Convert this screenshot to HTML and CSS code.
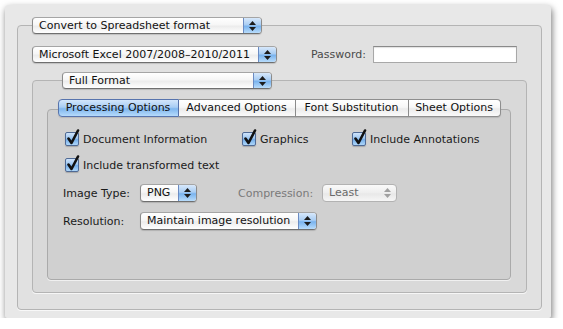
FILE: index.html
```html
<!DOCTYPE html>
<html>
<head>
<meta charset="utf-8">
<link rel="stylesheet" href="styles.css">
</head>
<body>
<div class="window">
  <div class="group g1">
    <div class="popup title p-convert">
      <span class="ptext">Convert to Spreadsheet format</span>
      <span class="parrow"><svg width="7" height="10" viewBox="0 0 7 10"><polygon points="0,4 3.5,0 7,4"/><polygon points="0,6 7,6 3.5,10"/></svg></span>
    </div>
    <div class="row r-format">
      <div class="popup p-excel">
        <span class="ptext">Microsoft Excel 2007/2008–2010/2011</span>
        <span class="parrow"><svg width="7" height="10" viewBox="0 0 7 10"><polygon points="0,4 3.5,0 7,4"/><polygon points="0,6 7,6 3.5,10"/></svg></span>
      </div>
      <span class="lbl pw">Password:</span>
      <div class="field"></div>
    </div>
    <div class="group g2">
      <div class="popup title p-full">
        <span class="ptext">Full Format</span>
        <span class="parrow"><svg width="7" height="10" viewBox="0 0 7 10"><polygon points="0,4 3.5,0 7,4"/><polygon points="0,6 7,6 3.5,10"/></svg></span>
      </div>
      <div class="tabbox">
        <div class="tabs">
          <div class="tab sel t1">Processing Options</div>
          <div class="tab t2">Advanced Options</div>
          <div class="tab t3">Font Substitution</div>
          <div class="tab t4">Sheet Options</div>
        </div>
        <div class="pane">
          <div class="crow c1">
            <label class="cb w1"><span class="box"><svg width="16" height="17" viewBox="0 0 16 17"><path d="M3.5 9.5 L6.5 14 L13 1.5" fill="none" stroke="#111" stroke-width="2.6" stroke-linecap="round" stroke-linejoin="round"/></svg></span>Document Information</label>
            <label class="cb w2"><span class="box"><svg width="16" height="17" viewBox="0 0 16 17"><path d="M3.5 9.5 L6.5 14 L13 1.5" fill="none" stroke="#111" stroke-width="2.6" stroke-linecap="round" stroke-linejoin="round"/></svg></span>Graphics</label>
            <label class="cb"><span class="box"><svg width="16" height="17" viewBox="0 0 16 17"><path d="M3.5 9.5 L6.5 14 L13 1.5" fill="none" stroke="#111" stroke-width="2.6" stroke-linecap="round" stroke-linejoin="round"/></svg></span>Include Annotations</label>
          </div>
          <div class="crow c2">
            <label class="cb"><span class="box"><svg width="16" height="17" viewBox="0 0 16 17"><path d="M3.5 9.5 L6.5 14 L13 1.5" fill="none" stroke="#111" stroke-width="2.6" stroke-linecap="round" stroke-linejoin="round"/></svg></span>Include transformed text</label>
          </div>
          <div class="frow f1">
            <span class="lbl fl">Image Type:</span>
            <div class="popup p-png">
              <span class="ptext">PNG</span>
              <span class="parrow"><svg width="7" height="10" viewBox="0 0 7 10"><polygon points="0,4 3.5,0 7,4"/><polygon points="0,6 7,6 3.5,10"/></svg></span>
            </div>
            <span class="lbl dis cl">Compression:</span>
            <div class="popup disabled p-least">
              <span class="ptext">Least</span>
              <span class="parrow"><svg width="7" height="10" viewBox="0 0 7 10"><polygon points="0,4 3.5,0 7,4"/><polygon points="0,6 7,6 3.5,10"/></svg></span>
            </div>
          </div>
          <div class="frow f2">
            <span class="lbl fl">Resolution:</span>
            <div class="popup p-res">
              <span class="ptext">Maintain image resolution</span>
              <span class="parrow"><svg width="7" height="10" viewBox="0 0 7 10"><polygon points="0,4 3.5,0 7,4"/><polygon points="0,6 7,6 3.5,10"/></svg></span>
            </div>
          </div>
        </div>
      </div>
    </div>
  </div>
</div>
</body>
</html>
```

FILE: styles.css
```css
* { box-sizing: border-box; }
html, body { margin: 0; padding: 0; background: #fff; }
body {
  font-family: "DejaVu Sans", "Lucida Grande", sans-serif;
  font-size: 11px;
  color: #1a1a1a;
}
.window {
  margin: 5px 0 0 5px;
  width: 546px;
  height: 313px;
  background: #e8e8e8;
  border-radius: 4px 4px 2px 2px;
  box-shadow: 1px 3px 7px rgba(0,0,0,0.55);
  padding: 20px 9px 8px 12px;
  display: flex;
  flex-direction: column;
}
.group {
  border: 1px solid #b4b4b4;
  border-radius: 4px;
  box-shadow: 0 1px 0 rgba(255,255,255,0.7);
  display: flex;
  flex-direction: column;
  align-items: flex-start;
}
.g1 {
  flex: 1;
  background: #e1e1e1;
  padding: 0 14px 16px 14px;
}
.g2 {
  align-self: stretch;
  flex: 1;
  margin-top: 17px;
  background: #d9d9d9;
  padding: 0 15px 12px 14px;
}
.title { margin-top: -9px; }
.g2 .title { margin-left: 15px; }

/* popup buttons */
.popup {
  height: 17px;
  display: flex;
  border: 1px solid #8b8b8b;
  border-top-color: #a5a5a5;
  border-bottom-color: #6f6f6f;
  border-radius: 4px;
  background: linear-gradient(#ffffff, #f6f6f6 45%, #ececec 55%, #ffffff);
  box-shadow: 0 1px 1px rgba(0,0,0,0.15);
  overflow: hidden;
}
.ptext {
  flex: 1;
  padding-left: 6px;
  line-height: 15px;
  white-space: nowrap;
  overflow: hidden;
  color: #111;
}
.parrow {
  width: 18px;
  border-left: 1px solid #6b8bc2;
  background: linear-gradient(#d7e8fb, #a9cdf3 45%, #79b3ee 55%, #b8dcfb);
  display: flex;
  align-items: center;
  justify-content: center;
}
.parrow svg { fill: #1c1c1c; }
.p-convert { width: 230px; }
.p-excel { width: 245px; }
.p-full { width: 210px; }
.p-png { width: 57px; height: 18px; }
.p-least { width: 75px; height: 18px; }
.p-res { width: 177px; height: 18px; }
.p-png .ptext, .p-least .ptext, .p-res .ptext { line-height: 16px; }
.popup.disabled {
  border-color: #b2b2b2;
  background: linear-gradient(#fafafa, #eeeeee 50%, #e8e8e8 55%, #f6f6f6);
  box-shadow: none;
}
.popup.disabled .ptext { color: #6a6a6a; }
.popup.disabled .parrow {
  background: transparent;
  border-left: none;
}
.popup.disabled .parrow svg { fill: #a0a0a0; }

.row {
  display: flex;
  align-items: center;
  align-self: stretch;
  margin-top: 12px;
  padding-right: 10px;
}
.lbl { white-space: nowrap; }
.pw { margin-left: auto; color: #4a4a4a; margin-right: 7px; }
.field {
  width: 144px;
  height: 17px;
  background: #fff;
  border: 1px solid #a8a8a8;
  border-top-color: #8a8a8a;
  box-shadow: inset 0 1px 1px rgba(0,0,0,0.12);
}

/* tab box */
.tabbox {
  align-self: stretch;
  flex: 1;
  margin-top: 20px;
  border: 1px solid #aaaaaa;
  border-radius: 4px;
  background: #d0d0d0;
  box-shadow: 0 1px 0 rgba(255,255,255,0.6);
  display: flex;
  flex-direction: column;
}
.tabs {
  display: flex;
  justify-content: center;
  margin-top: -11px;
}
.tab {
  height: 18px;
  line-height: 16px;
  text-align: center;
  border: 1px solid #8e8e8e;
  border-left: none;
  background: linear-gradient(#ffffff, #f7f7f7 45%, #ebebeb 55%, #fafafa);
  color: #111;
  white-space: nowrap;
  box-shadow: 0 1px 1px rgba(0,0,0,0.12);
}
.tab.t1 {
  border-left: 1px solid #5775b0;
  border-radius: 4px 0 0 4px;
}
.tab.t4 { border-radius: 0 4px 4px 0; }
.tab.sel {
  border-color: #5774ad;
  background: linear-gradient(#d3e6fb, #a8cdf4 45%, #7fb6ee 55%, #b6dbfb);
}
.t1 { width: 121px; }
.t2 { width: 117px; }
.t3 { width: 113px; }
.t4 { width: 92px; }

.pane {
  padding: 12px 0 0 0;
}
.crow {
  display: flex;
  height: 20px;
  align-items: center;
  padding-left: 17px;
}
.c2 { margin-top: 6px; }
.cb {
  display: flex;
  align-items: center;
  white-space: nowrap;
}
.w1 { width: 177px; }
.w2 { width: 110px; }
.box {
  position: relative;
  width: 14px;
  height: 14px;
  margin-right: 4px;
  border: 1px solid #4f6a95;
  border-radius: 2px;
  background: linear-gradient(#cfe3fa, #9cc6f1 45%, #74aeea 55%, #aed6f9);
  box-shadow: 0 1px 1px rgba(0,0,0,0.2);
}
.box svg {
  position: absolute;
  left: -1px;
  top: -4px;
}
.frow {
  display: flex;
  align-items: center;
  padding-left: 15px;
}
.f1 { margin-top: 9px; }
.f2 { margin-top: 10px; }
.fl { width: 77px; }
.cl { margin-left: 41px; width: 84px; }
.dis { color: #7a7a7a; }
```
